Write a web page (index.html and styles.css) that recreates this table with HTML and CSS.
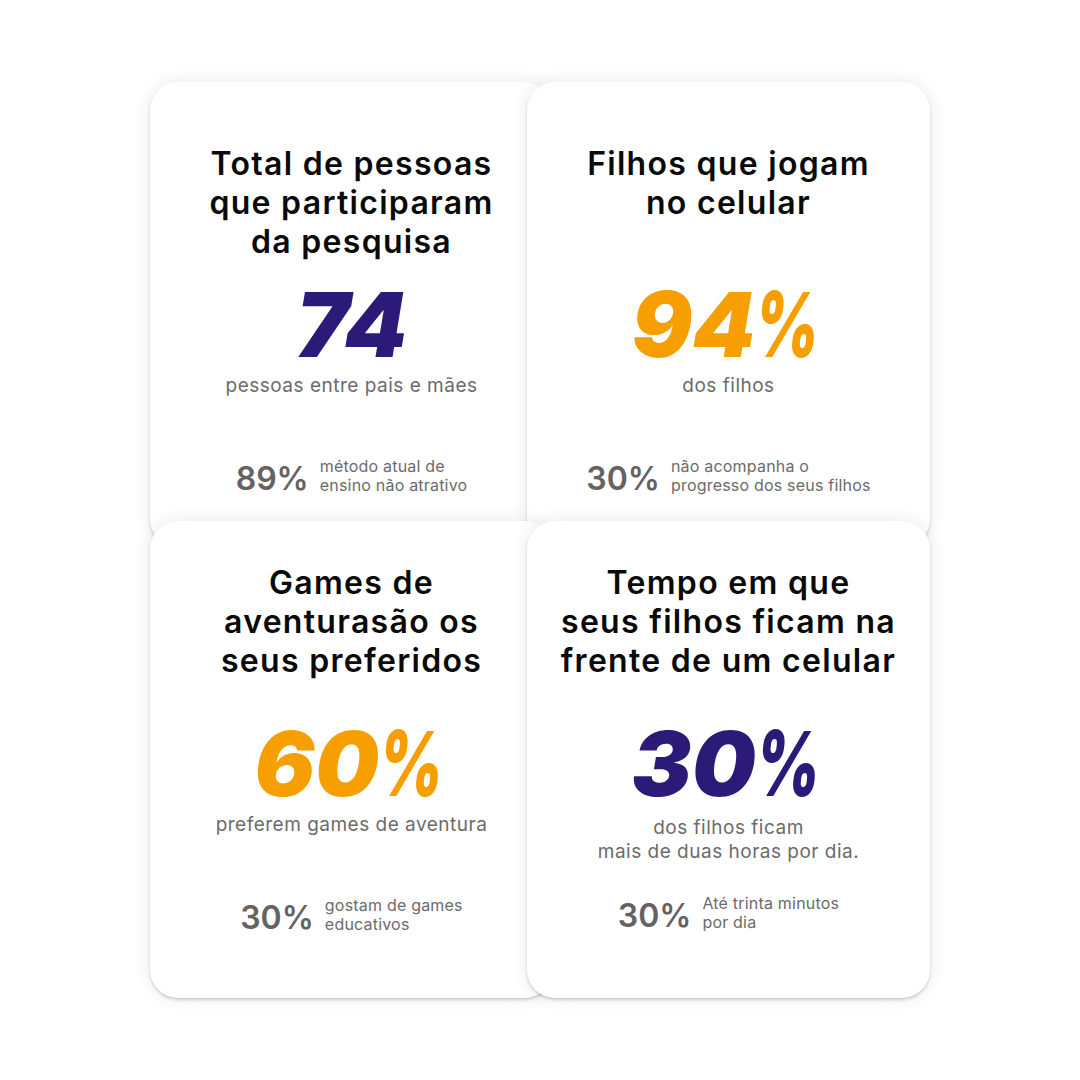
FILE: index.html
```html
<!DOCTYPE html>
<html lang="pt-BR">
<head>
<meta charset="utf-8">
<title>Pesquisa</title>
<link rel="stylesheet" href="styles.css">
</head>
<body>
<main class="grid">
  <section class="card card-top">
    <div class="head head-top">
      <h2 class="title">Total de pessoas<br>que participaram<br>da pesquisa</h2>
    </div>
    <div class="num num-indigo">74</div>
    <p class="sub">pessoas entre pais e mães</p>
    <div class="stat">
      <span class="stat-num">89%</span>
      <span class="stat-text">método atual de<br>ensino não atrativo</span>
    </div>
  </section>
  <section class="card card-top">
    <div class="head head-top">
      <h2 class="title">Filhos que jogam<br>no celular</h2>
    </div>
    <div class="num num-orange">94<span class="pct">%</span></div>
    <p class="sub">dos filhos</p>
    <div class="stat">
      <span class="stat-num">30%</span>
      <span class="stat-text">não acompanha o<br>progresso dos seus filhos</span>
    </div>
  </section>
  <section class="card card-bottom">
    <div class="head head-bottom">
      <h2 class="title">Games de<br>aventurasão os<br>seus preferidos</h2>
    </div>
    <div class="num num-orange">60<span class="pct">%</span></div>
    <p class="sub">preferem games de aventura</p>
    <div class="stat">
      <span class="stat-num">30%</span>
      <span class="stat-text">gostam de games<br>educativos</span>
    </div>
  </section>
  <section class="card card-bottom">
    <div class="head head-bottom">
      <h2 class="title">Tempo em que<br>seus filhos ficam na<br>frente de um celular</h2>
    </div>
    <div class="num num-indigo">30<span class="pct">%</span></div>
    <p class="sub sub-two">dos filhos ficam<br>mais de duas horas por dia.</p>
    <div class="stat stat-raised">
      <span class="stat-num">30%</span>
      <span class="stat-text">Até trinta minutos<br>por dia</span>
    </div>
  </section>
</main>
</body>
</html>
```

FILE: styles.css
```css
html, body {
  margin: 0;
  padding: 0;
  background: #ffffff;
}

body {
  width: 1080px;
  height: 1080px;
  overflow: hidden;
  font-family: Inter, "Open Sans", "DejaVu Sans", sans-serif;
}

.grid {
  display: grid;
  grid-template-columns: 377px 403px;
  grid-template-rows: 439px 477px;
  margin: 82px 0 0 150px;
}

.card {
  width: 403px;
  box-sizing: border-box;
  background: #ffffff;
  border-radius: 28px;
  box-shadow: 0 2px 3px rgba(0, 0, 0, 0.16), 0 0 18px rgba(0, 0, 0, 0.09);
  display: flex;
  flex-direction: column;
  align-items: center;
  text-align: center;
}

.card-top {
  height: 465px;
}

.card-bottom {
  height: 477px;
}

.head {
  height: 198px;
  box-sizing: border-box;
  width: 100%;
}

.head-top {
  padding-top: 62px;
}

.head-bottom {
  padding-top: 42px;
}

.title {
  margin: 0;
  font-size: 32px;
  line-height: 39px;
  font-weight: 600;
  letter-spacing: 1.3px;
  color: #0a0a0a;
  white-space: nowrap;
}

.num {
  font-size: 90px;
  line-height: 90px;
  height: 90px;
  font-weight: 900;
  font-style: italic;
  letter-spacing: 0;
}

.pct {
  display: inline-block;
  transform: scaleX(0.68);
  transform-origin: left center;
  margin-right: -24px;
}

.num-indigo {
  color: #2b1a78;
}

.num-orange {
  color: #f79e00;
}

.sub {
  margin: 4px 0 0;
  height: 83px;
  font-size: 19px;
  line-height: 24px;
  letter-spacing: 0.5px;
  color: #6b6b6b;
  white-space: nowrap;
}

.sub-two {
  margin-top: 7px;
  height: 80px;
}

.stat {
  display: flex;
  align-items: center;
  gap: 11px;
}

.stat-raised {
  margin-top: -2px;
}

.stat-num {
  font-size: 32px;
  font-weight: 600;
  color: #666262;
}

.stat-text {
  font-size: 16px;
  line-height: 19px;
  letter-spacing: 0.2px;
  color: #6b6b6b;
  text-align: left;
  white-space: nowrap;
  margin-bottom: 5px;
}
```
